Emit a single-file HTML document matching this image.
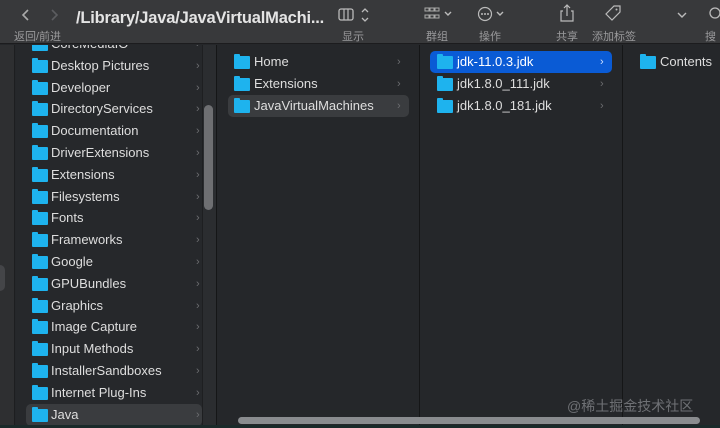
<!DOCTYPE html>
<html><head><meta charset="utf-8">
<style>
*{margin:0;padding:0;box-sizing:border-box}
body{width:720px;height:428px;overflow:hidden;background:#25272a;font-family:"Liberation Sans","Noto Sans CJK SC",sans-serif;color:#dcdcdc;position:relative}
.tb{position:absolute;left:0;top:0;width:720px;height:44px;background:#38393b;border-bottom:1px solid #1c1c1e}
.tb .t{position:absolute;color:#9a9a9c;font-size:11px}
.title{position:absolute;left:76px;top:9px;font-size:16.5px;font-weight:bold;color:#e4e4e4;letter-spacing:-0.2px}
.side{position:absolute;left:0;top:45px;width:15px;height:383px;background:#2e2f31;border-right:1px solid #1d1e20}
.col{position:absolute;top:45px;height:380px;border-right:1px solid #151617;overflow:hidden}
.row{position:absolute;left:0;height:22px;width:100%;font-size:13px;line-height:22px;color:#dedede}
.row .f{position:absolute;top:5px;width:16px;height:13px;background:#1eb3ee;border-radius:1px}
.row .f:before{content:"";position:absolute;left:0;top:-2px;width:6px;height:3px;background:#1eb3ee;border-radius:1px 1px 0 0}
.row .n{position:absolute}
.row .c{position:absolute;color:#6c6d70;font-size:11px}
.sel{background:#0a5bd5;border-radius:5px}
.hl{background:#3a3c3f;border-radius:5px}
</style></head><body>
<div class="tb">
 <svg style="position:absolute;left:20px;top:8px" width="40" height="14"><path d="M8 2 L3 7 L8 12" stroke="#aaa" stroke-width="1.6" fill="none"/><path d="M32 2 L37 7 L32 12" stroke="#5c5d60" stroke-width="1.6" fill="none"/></svg>
 <div class="t" style="left:14px;top:28px">返回/前进</div>
 <div class="title">/Library/Java/JavaVirtualMachi...</div>
 <svg style="position:absolute;left:338px;top:7px" width="34" height="16"><rect x="1" y="2" width="14" height="11" rx="2" stroke="#bbb" fill="none" stroke-width="1.3"/><path d="M6 2v11M10 2v11" stroke="#bbb" stroke-width="1.2"/><path d="M24 5l3-3 3 3M24 11l3 3 3-3" stroke="#bbb" fill="none" stroke-width="1.3"/></svg>
 <div class="t" style="left:342px;top:28px">显示</div>
 <svg style="position:absolute;left:424px;top:6px" width="32" height="16"><g fill="none" stroke="#aaa" stroke-width="1"><rect x="1" y="2" width="4" height="3"/><rect x="6" y="2" width="4" height="3"/><rect x="11" y="2" width="4" height="3"/><rect x="1" y="9" width="4" height="3"/><rect x="6" y="9" width="4" height="3"/><rect x="11" y="9" width="4" height="3"/></g><path d="M21 6l3 3 3-3" stroke="#bbb" fill="none" stroke-width="1.4"/></svg>
 <div class="t" style="left:426px;top:28px">群组</div>
 <svg style="position:absolute;left:477px;top:6px" width="32" height="16"><circle cx="8" cy="8" r="6.5" stroke="#bbb" fill="none" stroke-width="1.2"/><circle cx="5" cy="8" r="1" fill="#bbb"/><circle cx="8" cy="8" r="1" fill="#bbb"/><circle cx="11" cy="8" r="1" fill="#bbb"/><path d="M20 6l3 3 3-3" stroke="#bbb" fill="none" stroke-width="1.4"/></svg>
 <div class="t" style="left:479px;top:28px">操作</div>
 <svg style="position:absolute;left:559px;top:4px" width="16" height="18"><path d="M4 7H2v10h12V7h-2M8 12V1M5 4l3-3 3 3" stroke="#bbb" fill="none" stroke-width="1.2"/></svg>
 <div class="t" style="left:556px;top:28px">共享</div>
 <svg style="position:absolute;left:604px;top:5px" width="18" height="18"><path d="M10 1h6v6l-8 8-6-6z" stroke="#bbb" fill="none" stroke-width="1.2"/><circle cx="12.5" cy="4.5" r="1" fill="#bbb"/></svg>
 <div class="t" style="left:592px;top:28px">添加标签</div>
 <svg style="position:absolute;left:676px;top:10px" width="12" height="10"><path d="M2 3l4 4 4-4" stroke="#bbb" fill="none" stroke-width="1.4"/></svg>
 <svg style="position:absolute;left:708px;top:6px" width="14" height="16"><circle cx="7" cy="7" r="5" stroke="#bbb" fill="none" stroke-width="1.3"/></svg>
 <div class="t" style="left:705px;top:28px">搜索</div>
</div>
<div class="side"><div style="position:absolute;left:0;top:220px;width:5px;height:26px;background:#444548;border-radius:0 6px 6px 0"></div></div>

<div class="col" style="left:16px;width:201px;background:#26282b">
 <div style="position:absolute;left:186px;top:0;width:15px;height:380px;background:#2b2d30;border-left:1px solid #1e1f21"></div>
 <div style="position:absolute;left:188px;top:60px;width:9px;height:105px;background:#6e6f72;border-radius:5px"></div>
 <div id="c1"></div>
</div>
<div class="col" style="left:217px;width:203px;background:#25272a">
 <div class="row" style="top:6px;left:0"><span class="f" style="left:17px"></span><span class="n" style="left:37px">Home</span><span class="c" style="left:180px">›</span></div>
 <div class="row" style="top:28px;left:0"><span class="f" style="left:17px"></span><span class="n" style="left:37px">Extensions</span><span class="c" style="left:180px">›</span></div>
 <div class="row hl" style="top:50px;left:11px;width:181px"><span class="f" style="left:6px"></span><span class="n" style="left:26px">JavaVirtualMachines</span><span class="c" style="left:169px">›</span></div>
</div>
<div class="col" style="left:420px;width:203px;background:#25272a">
 <div class="row sel" style="top:6px;left:10px;width:182px"><span class="f" style="left:7px"></span><span class="n" style="left:27px;color:#fff">jdk-11.0.3.jdk</span><span class="c" style="left:170px;color:#cfe0ff">›</span></div>
 <div class="row" style="top:28px"><span class="f" style="left:17px"></span><span class="n" style="left:37px">jdk1.8.0_111.jdk</span><span class="c" style="left:180px">›</span></div>
 <div class="row" style="top:50px"><span class="f" style="left:17px"></span><span class="n" style="left:37px">jdk1.8.0_181.jdk</span><span class="c" style="left:180px">›</span></div>
</div>
<div class="col" style="left:623px;width:97px;background:#25272a;border-right:none">
 <div class="row" style="top:6px"><span class="f" style="left:17px"></span><span class="n" style="left:37px">Contents</span></div>
</div>
<div style="position:absolute;left:238px;top:417px;width:462px;height:7px;background:#8a8c8f;border-radius:4px"></div>
<div style="position:absolute;left:0;top:425px;width:720px;height:3px;background:#1a2a2a"></div>
<div style="position:absolute;left:567px;top:396px;font-size:14px;color:#6f7175">@稀土掘金技术社区</div>
<script>
var n=["CoreMediaIO","Desktop Pictures","Developer","DirectoryServices","Documentation","DriverExtensions","Extensions","Filesystems","Fonts","Frameworks","Google","GPUBundles","Graphics","Image Capture","Input Methods","InstallerSandboxes","Internet Plug-Ins","Java"];
var h="";for(var i=0;i<n.length;i++){var t=-12+i*21.8;var j=i==n.length-1;
h+='<div class="row'+(j?' hl':'')+'" style="top:'+t+'px;left:'+(j?10:0)+'px;width:'+(j?176:186)+'px"><span class="f" style="left:'+(j?6:16)+'px"></span><span class="n" style="left:'+(j?25:35)+'px">'+n[i]+'</span><span class="c" style="left:'+(j?170:180)+'px">›</span></div>';}
document.getElementById("c1").innerHTML=h;
</script>
</body></html>
